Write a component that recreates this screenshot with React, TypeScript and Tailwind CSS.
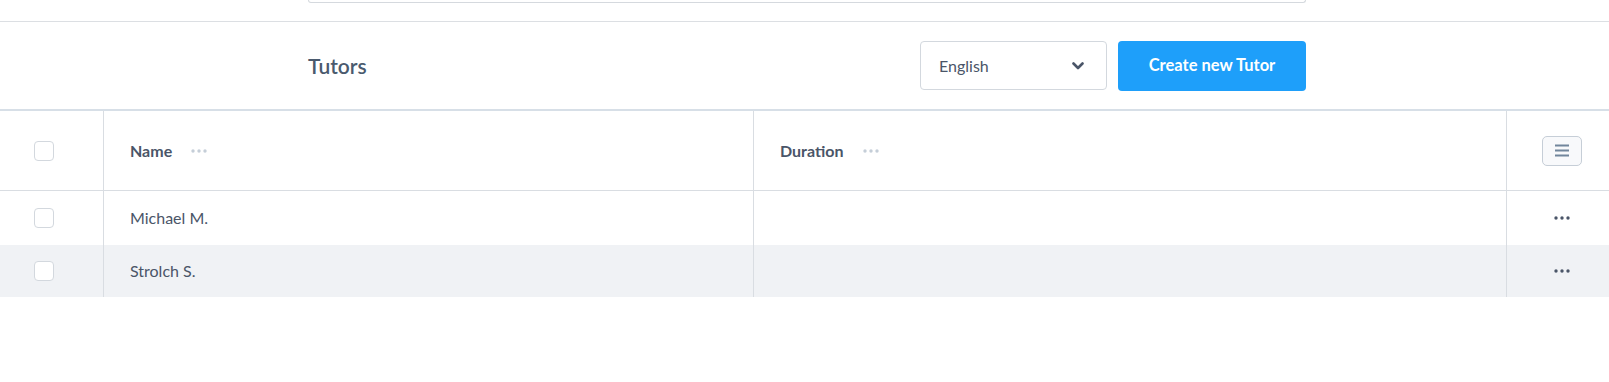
import React from "react";

const font = { fontFamily: '"Source Sans Pro", "Lato", "Noto Sans", sans-serif' };

function Dots({ light }: { light?: boolean }) {
  const c = light ? "#c5ced8" : "#4a5568";
  return (
    <svg width="16" height="4" viewBox="0 0 16 4">
      <circle cx="2" cy="2" r="1.7" fill={c} />
      <circle cx="8" cy="2" r="1.7" fill={c} />
      <circle cx="14" cy="2" r="1.7" fill={c} />
    </svg>
  );
}

function Checkbox() {
  return <div className="w-[20px] h-[20px] rounded-[4px] border border-[#d3d8de] bg-white" />;
}

export default function App() {
  const rows = ["Michael M.", "Strolch S."];
  return (
    <div className="w-[1609px] h-[382px] bg-white text-[#4a5568]" style={font}>
      <div className="h-[22px] border-b border-[#dcdfe3]">
        <div className="ml-[308px] w-[998px] h-[3px] border-x border-b border-[#d5d9de] rounded-b-[4px]" />
      </div>
      <div className="h-[87px] flex items-center">
        <div className="ml-[308px] w-[998px] flex items-center">
          <div className="text-[21px] font-semibold text-[#4a5a6e] flex-1">Tutors</div>
          <div className="w-[187px] h-[49px] border border-[#d3d8de] rounded-[4px] flex items-center justify-between pl-[18px] pr-[22px] text-[16px] text-[#4a5568]">
            <span>English</span>
            <svg width="12" height="8" viewBox="0 0 12 8">
              <path d="M1.5 1.5l4.5 4.5 4.5-4.5" stroke="#4a5568" strokeWidth="2.6" fill="none" strokeLinecap="round" strokeLinejoin="round" />
            </svg>
          </div>
          <div className="ml-[11px] w-[188px] h-[50px] rounded-[4px] bg-[#1e9ffa] text-white font-bold text-[16.5px] flex items-center justify-center">
            Create new Tutor
          </div>
        </div>
      </div>
      <div className="border-t-2 border-[#d7dfe7]">
        <div className="flex h-[80px] border-b border-[#d9dde2]">
          <div className="w-[104px] border-r border-[#d9dde2] flex items-center pl-[34px]">
            <Checkbox />
          </div>
          <div className="w-[650px] border-r border-[#d9dde2] flex items-center pl-[26px] gap-[19px]">
            <span className="text-[16px] font-bold text-[#4a5568]">Name</span>
            <Dots light />
          </div>
          <div className="w-[753px] border-r border-[#d9dde2] flex items-center pl-[26px] gap-[20px]">
            <span className="text-[16px] font-bold text-[#4a5568]">Duration</span>
            <Dots light />
          </div>
          <div className="flex-1 flex items-center justify-end pr-[27px]">
            <div className="w-[40px] h-[30px] rounded-[5px] border border-[#c6ced7] bg-[#f8f9fb] flex items-center justify-center">
              <svg width="16" height="13" viewBox="0 0 16 13">
                <path d="M1 1.5h14M1 6.5h14M1 11.5h14" stroke="#71869c" strokeWidth="2" />
              </svg>
            </div>
          </div>
        </div>
        {rows.map((r, i) => (
          <div key={r} className={`flex ${i === 0 ? "h-[54px]" : "h-[52px]"} ${i === 1 ? "bg-[#f0f2f5]" : "bg-white"}`}>
            <div className="w-[104px] border-r border-[#d9dde2] flex items-center pl-[34px]">
              <Checkbox />
            </div>
            <div className="w-[650px] border-r border-[#d9dde2] flex items-center pl-[26px] text-[16px] text-[#4a5568]">
              {r}
            </div>
            <div className="w-[753px] border-r border-[#d9dde2]" />
            <div className="flex-1 flex items-center justify-end pr-[39px]">
              <Dots />
            </div>
          </div>
        ))}
      </div>
    </div>
  );
}
